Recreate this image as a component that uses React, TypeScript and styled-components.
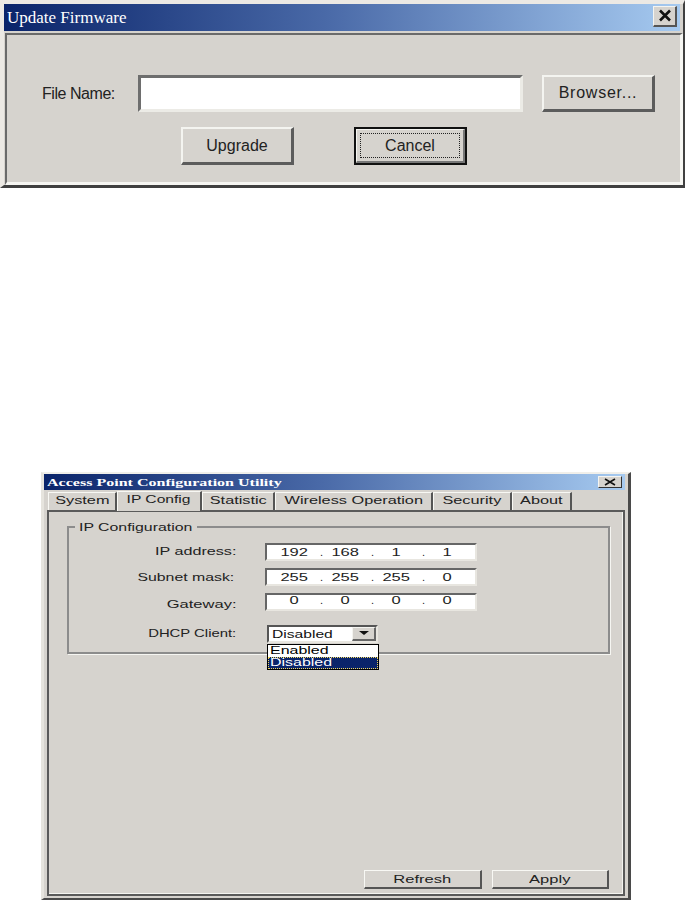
import React from "react";
import styled, { createGlobalStyle } from "styled-components";

const FACE = "#d6d3ce";

const Global = createGlobalStyle`
  html, body { margin: 0; padding: 0; background: #fff; }
  body { font-family: "Liberation Sans", Arial, sans-serif; color: #111; width: 685px; height: 901px; overflow: hidden; }
  * { box-sizing: border-box; }
`;

const Page = styled.div`
  display: flex;
  flex-direction: column;
  align-items: flex-start;
  width: 685px;
  height: 901px;
`;

const UpdateWindow = styled.section`
  width: 685px;
  height: 188px;
  display: flex;
  flex-direction: column;
  background: ${FACE};
  border-style: solid;
  border-width: 4px 2px 3px 4px;
  border-color: #ece9e4 #404040 #404040 #ece9e4;
`;

const TitleBar = styled.header<{ $h: number; $mr: number }>`
  height: ${(p) => p.$h}px;
  margin-right: ${(p) => p.$mr}px;
  padding-right: 3px;
  display: flex;
  flex: none;
  align-items: center;
  justify-content: space-between;
  background: linear-gradient(90deg, #0a246a 0%, #4a6aa8 48%, #a6caf0 100%);
  color: #fff;
`;

const BigTitle = styled.h1`
  margin: 0 0 0 3px;
  font: 400 17px/20px "Liberation Serif", "Times New Roman", serif;
`;

const CloseBig = styled.button`
  width: 24px;
  height: 21px;
  margin-bottom: 3px;
  padding: 0;
  display: flex;
  align-items: center;
  justify-content: center;
  background: ${FACE};
  border-style: solid;
  border-width: 1px 2px 2px 1px;
  border-color: #f4f4f0 #555 #555 #f4f4f0;
`;

const UpdateBody = styled.div`
  flex: 1;
  margin: 2px 0 0 1px;
  padding: 40px 0 0 35px;
  border-style: solid;
  border-width: 2px 3px 3px 2px;
  border-color: #6a6a6a #f6f6f2 #f6f6f2 #6a6a6a;
`;

const FileRow = styled.div`
  display: flex;
  align-items: center;
  height: 37px;
`;

const FileLabel = styled.label`
  width: 96px;
  font-size: 16px;
  letter-spacing: -0.45px;
  color: #222;
`;

const FileInput = styled.div`
  width: 385px;
  height: 37px;
  background: #fff;
  border-style: solid;
  border-width: 3px;
  border-color: #6e6e6e #ecebe6 #ecebe6 #6e6e6e;
`;

const BigButton = styled.button<{ $ml: number; $h: number; $ls?: number }>`
  width: 113px;
  height: ${(p) => p.$h}px;
  margin-left: ${(p) => p.$ml}px;
  padding: 0;
  font: 400 16px "Liberation Sans", Arial, sans-serif;
  letter-spacing: ${(p) => p.$ls ?? 0}px;
  color: #222;
  background: ${FACE};
  border-style: solid;
  border-width: 2px 3px 3px 2px;
  border-color: #f4f4f0 #5c5c5c #5c5c5c #f4f4f0;
`;

const ActionRow = styled.div`
  display: flex;
  margin: 15px 0 0 139px;
`;

const FocusButton = styled.button`
  width: 113px;
  height: 38px;
  margin-left: 60px;
  padding: 0;
  background: ${FACE};
  border: 2px solid #111;
`;

const FocusBevel = styled.span`
  display: flex;
  height: 100%;
  padding: 3px;
  border-style: solid;
  border-width: 1px 2px 2px 1px;
  border-color: #f4f4f0 #777 #777 #f4f4f0;
`;

const FocusRing = styled.span`
  flex: 1;
  display: flex;
  align-items: center;
  justify-content: center;
  font: 400 16px "Liberation Sans", Arial, sans-serif;
  color: #222;
  border: 1px dotted #222;
`;

const ConfigWindow = styled.section`
  width: 590px;
  height: 428px;
  margin: 284px 0 0 41px;
  display: flex;
  flex-direction: column;
  background: ${FACE};
  border-style: solid;
  border-width: 2px 3px 2px 3px;
  border-color: #f0efea #4a4a4a #4a4a4a #e6e4de;
`;

const Wide = styled.span<{ $origin?: string; $weight?: number; $sx?: number }>`
  display: inline-block;
  white-space: nowrap;
  font-weight: ${(p) => p.$weight ?? 400};
  transform: scaleX(${(p) => p.$sx ?? 1.5});
  transform-origin: ${(p) => p.$origin ?? "center"};
`;

const SmallTitle = styled.h2`
  margin: 0 0 0 3px;
  font: 700 10.7px/16px "Liberation Serif", "Times New Roman", serif;
`;

const CloseSmall = styled.button`
  width: 24px;
  height: 12px;
  padding: 0;
  display: flex;
  align-items: center;
  justify-content: center;
  background: ${FACE};
  border-style: solid;
  border-width: 1px;
  border-color: #f4f4f0 #333 #333 #f4f4f0;
`;

const TabStrip = styled.nav`
  display: flex;
  align-items: flex-end;
  height: 20px;
  padding-left: 4px;
  flex: none;
`;

const Tab = styled.div<{ $w: number; $active?: boolean }>`
  width: ${(p) => p.$w}px;
  height: ${(p) => (p.$active ? 20 : 18)}px;
  padding-top: 1px;
  margin-bottom: ${(p) => (p.$active ? -1 : 0)}px;
  position: relative;
  z-index: ${(p) => (p.$active ? 1 : 0)};
  text-align: center;
  font-size: 11px;
  line-height: 13px;
  color: #222;
  background: ${FACE};
  border-style: solid;
  border-width: 1px 2px 0 1px;
  border-color: #f8f8f4 #555 transparent #f8f8f4;
`;

const Panel = styled.div`
  flex: 1;
  margin: 0 0 2px 3px;
  display: flex;
  flex-direction: column;
  width: 578px;
  border: 2px solid #5a5a5a;
  box-shadow: inset -1px -1px 0 #f4f4f0;
`;

const Group = styled.fieldset`
  width: 543px;
  height: 135px;
  margin: 7px 0 0 18px;
  padding: 8px 0 0 0;
  min-width: 0;
  border: 2px solid #8c8c8c;
  box-shadow: 1px 1px 0 #f6f6f2;
  position: relative;
`;

const GroupLegend = styled.legend`
  width: 122px;
  height: 16px;
  margin-left: 6px;
  padding: 0 0 0 4px;
  font-size: 11px;
  line-height: 17px;
  color: #222;
  background: ${FACE};
`;

const FieldRow = styled.div<{ $mt: number }>`
  display: grid;
  grid-template-columns: 167px auto;
  column-gap: 29px;
  align-items: center;
  justify-content: start;
  height: 18px;
  margin-top: ${(p) => p.$mt}px;
`;

const FieldLabel = styled.label<{ $pt?: number; $pb?: number; $pr?: number }>`
  padding: ${(p) => p.$pt ?? 0}px ${(p) => p.$pr ?? 0}px ${(p) => p.$pb ?? 0}px 0;
  text-align: right;
  font-size: 11px;
  line-height: 14px;
  color: #222;
`;

const IpBox = styled.div<{ $pb?: number; $lh?: number }>`
  width: 212px;
  height: 18px;
  display: grid;
  grid-template-columns: 30px 21px 30px 21px 30px 21px 30px;
  align-items: center;
  padding-left: 12px;
  padding-bottom: ${(p) => p.$pb ?? 0}px;
  line-height: ${(p) => p.$lh ?? 14}px;
  background: #fff;
  border-style: solid;
  border-width: 2px;
  border-color: #666 #e8e6e0 #e8e6e0 #666;
`;

const Octet = styled.span`
  text-align: center;
  font-size: 11px;
  color: #222;
`;

const Dot = styled(Octet)`
  padding-left: 4px;
`;

const ComboWrap = styled.div`
  width: 111px;
  height: 18px;
  margin-left: 2px;
  position: relative;
`;

const ComboBox = styled.div`
  height: 18px;
  display: flex;
  align-items: center;
  justify-content: space-between;
  padding-left: 3px;
  background: #fff;
  border-style: solid;
  border-width: 2px;
  border-color: #555 #e8e6e0 #e8e6e0 #555;
  font-size: 11px;
  color: #111;
`;

const ComboArrow = styled.span`
  width: 24px;
  height: 14px;
  display: flex;
  align-items: center;
  justify-content: center;
  background: ${FACE};
  border-style: solid;
  border-width: 1px 2px 2px 1px;
  border-color: #f4f4f0 #666 #666 #f4f4f0;
`;

const DropList = styled.ul`
  position: absolute;
  top: 19px;
  left: 0;
  width: 112px;
  margin: 0;
  padding: 0;
  list-style: none;
  background: #fff;
  border: 1px solid #000;
  z-index: 2;
`;

const DropItem = styled.li<{ $selected?: boolean }>`
  height: 12px;
  padding-left: 2px;
  font-size: 11px;
  line-height: 11px;
  color: ${(p) => (p.$selected ? "#fff" : "#000")};
  background: ${(p) => (p.$selected ? "#0a246a" : "#fff")};
  outline: ${(p) => (p.$selected ? "1px dotted #f0d860" : "none")};
  outline-offset: -1px;
`;

const Footer = styled.div`
  margin-top: auto;
  margin-bottom: 5px;
  padding-right: 14px;
  display: flex;
  justify-content: flex-end;
  gap: 10px;
`;

const SmallButton = styled.button<{ $w: number }>`
  width: ${(p) => p.$w}px;
  height: 19px;
  padding: 0;
  font: 400 11px "Liberation Sans", Arial, sans-serif;
  color: #222;
  background: ${FACE};
  border-style: solid;
  border-width: 1px 2px 2px 1px;
  border-color: #f8f8f4 #555 #555 #f8f8f4;
`;

const tabs = [
  { label: "System", w: 69 },
  { label: "IP Config", w: 85, active: true },
  { label: "Statistic", w: 73 },
  { label: "Wireless Operation", w: 158 },
  { label: "Security", w: 79 },
  { label: "About", w: 60 },
];

const ipRows = [
  { label: "IP address:", parts: ["192", "168", "1", "1"], mt: 0, sx: 1.47, lpb: 2, lpt: 0, lpr: 0, boxPb: 0, lh: 14 },
  { label: "Subnet mask:", parts: ["255", "255", "255", "0"], mt: 7, sx: 1.44, lpb: 0, lpt: 0, lpr: 2, boxPb: 0, lh: 14 },
  { label: "Gateway:", parts: ["0", "0", "0", "0"], mt: 7, sx: 1.5, lpb: 0, lpt: 4, lpr: 0, boxPb: 3, lh: 11 },
];

export default function App() {
  return (
    <Page>
      <Global />
      <UpdateWindow>
        <TitleBar $h={27} $mr={3}>
          <BigTitle>Update Firmware</BigTitle>
          <CloseBig aria-label="Close">
            <svg width="14" height="13" viewBox="0 0 14 13">
              <path d="M2 1.5 L12 11.5 M12 1.5 L2 11.5" stroke="#111" strokeWidth="2.6" fill="none" />
            </svg>
          </CloseBig>
        </TitleBar>
        <UpdateBody>
          <FileRow>
            <FileLabel>File Name:</FileLabel>
            <FileInput />
            <BigButton $ml={19} $h={37} $ls={0.75}>Browser...</BigButton>
          </FileRow>
          <ActionRow>
            <BigButton $ml={0} $h={38}>Upgrade</BigButton>
            <FocusButton>
              <FocusBevel>
                <FocusRing>Cancel</FocusRing>
              </FocusBevel>
            </FocusButton>
          </ActionRow>
        </UpdateBody>
      </UpdateWindow>

      <ConfigWindow>
        <TitleBar $h={16} $mr={3}>
          <SmallTitle>
            <Wide $origin="left" $weight={700}>Access Point Configuration Utility</Wide>
          </SmallTitle>
          <CloseSmall aria-label="Close">
            <svg width="14" height="8" viewBox="0 0 14 8">
              <path d="M2 1 L12 7 M12 1 L2 7" stroke="#111" strokeWidth="1.6" fill="none" />
            </svg>
          </CloseSmall>
        </TitleBar>
        <TabStrip>
          {tabs.map((t) => (
            <Tab key={t.label} $w={t.w} $active={t.active}>
              <Wide $sx={t.active ? 1.42 : 1.48}>{t.label}</Wide>
            </Tab>
          ))}
        </TabStrip>
        <Panel>
          <Group>
            <GroupLegend>
              <Wide $origin="left" $sx={1.44}>IP Configuration</Wide>
            </GroupLegend>
            {ipRows.map((r) => (
              <FieldRow key={r.label} $mt={r.mt}>
                <FieldLabel $pb={r.lpb} $pt={r.lpt} $pr={r.lpr}>
                  <Wide $origin="right" $sx={r.sx}>{r.label}</Wide>
                </FieldLabel>
                <IpBox $pb={r.boxPb} $lh={r.lh}>
                  {r.parts.map((part, i) => (
                    <React.Fragment key={i}>
                      {i > 0 && <Dot>.</Dot>}
                      <Octet>
                        <Wide>{part}</Wide>
                      </Octet>
                    </React.Fragment>
                  ))}
                </IpBox>
              </FieldRow>
            ))}
            <FieldRow $mt={14}>
              <FieldLabel $pb={2}>
                <Wide $origin="right" $sx={1.35}>DHCP Client:</Wide>
              </FieldLabel>
              <ComboWrap>
                <ComboBox>
                  <Wide $origin="left" $sx={1.42}>Disabled</Wide>
                  <ComboArrow>
                    <svg width="10" height="5" viewBox="0 0 10 5">
                      <path d="M0 0 H10 L5 4 Z" fill="#111" />
                    </svg>
                  </ComboArrow>
                </ComboBox>
                <DropList>
                  <DropItem><Wide $origin="left" $sx={1.45}>Enabled</Wide></DropItem>
                  <DropItem $selected><Wide $origin="left" $sx={1.45}>Disabled</Wide></DropItem>
                </DropList>
              </ComboWrap>
            </FieldRow>
          </Group>
          <Footer>
            <SmallButton $w={118}><Wide>Refresh</Wide></SmallButton>
            <SmallButton $w={117}><Wide>Apply</Wide></SmallButton>
          </Footer>
        </Panel>
      </ConfigWindow>
    </Page>
  );
}
